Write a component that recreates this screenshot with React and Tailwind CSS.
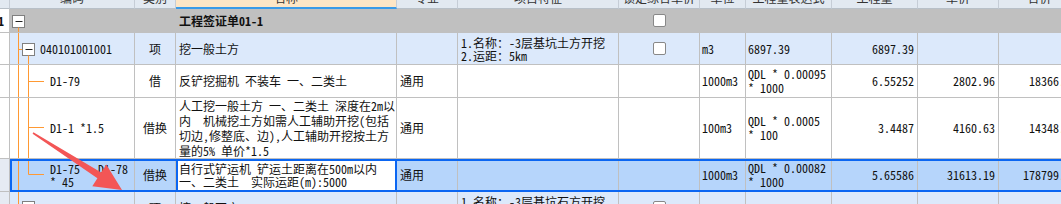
import React from 'react';

const W = [
  'w-[10px]', 'w-[125px]', 'w-[41px]', 'w-[221px]', 'w-[61px]', 'w-[161px]',
  'w-[81px]', 'w-[46px]', 'w-[86px]', 'w-[86px]', 'w-[81px]', 'w-[82px]',
];

const headers = ['', '编码', '类别', '名称', '专业', '项目特征', '锁定综合单价', '单位', '工程量表达式', '工程量', '单价', '合价'];

const ORANGE = '#ff9933';

function Cell({ i, className = '', children }) {
  return (
    <div className={`${W[i]} shrink-0 flex items-center overflow-hidden border-r border-b border-[#c0c0c0] ${className}`}>
      {children}
    </div>
  );
}

function Box({ x, y }) {
  return (
    <g>
      <rect x={x} y={y} width="12" height="12" fill="#fff" stroke="#808080" />
      <line x1={x + 3} y1={y + 6} x2={x + 10} y2={y + 6} stroke="#222" />
    </g>
  );
}

// tree connector lines drawn inside the code column
function Tree({ h, children }) {
  return (
    <svg className="absolute inset-0 pointer-events-none" width="125" height={h}>
      {children}
    </svg>
  );
}

function Check() {
  return <div className="w-[13px] h-[13px] bg-white border border-[#888] rounded-[2px]" />;
}

function Lines({ lines, className = '' }) {
  return (
    <div className={`whitespace-pre ${className}`}>
      {lines.map((l, k) => (
        <div key={k}>{l}</div>
      ))}
    </div>
  );
}

export default function App() {
  return (
    <div className="w-[1061px] h-[204px] overflow-hidden bg-white text-[12px] text-[#111] font-['Noto_Sans_Mono_CJK_SC','Noto_Sans_CJK_SC',monospace]">
      <div className="relative w-[1090px]">
        {/* header, only its lower edge is in view */}
        <div className="flex h-[9px]">
          {headers.map((t, i) => (
            <div
              key={i}
              className={`${W[i]} shrink-0 overflow-hidden border-r border-[#c6cdd6] ${
                i === 3 ? 'bg-[#fde6c6] border-b-2 border-b-[#3a9be8]' : 'bg-[#e2e9f1] border-b border-b-[#b8c0c8]'
              }`}
            >
              <div className="mt-[-8px] leading-[12px] text-center text-[#333] whitespace-nowrap">{t}</div>
            </div>
          ))}
        </div>

        {/* group row */}
        <div className="flex h-[24px] bg-[#c0c0c0]">
          <Cell i={0} className="bg-white font-bold">
            <span className="-ml-[2px]">1</span>
          </Cell>
          <Cell i={1} className="relative">
            <Tree h={24}>
              <Box x={2.5} y={6.5} />
              <line x1="8.5" y1="18.5" x2="8.5" y2="24" stroke={ORANGE} />
            </Tree>
          </Cell>
          <Cell i={2} />
          <Cell i={3} className="pl-[3px] font-bold">工程签证单01-1</Cell>
          <Cell i={4} />
          <Cell i={5} />
          <Cell i={6} className="justify-center">
            <Check />
          </Cell>
          <Cell i={7} />
          <Cell i={8} />
          <Cell i={9} />
          <Cell i={10} />
          <Cell i={11} />
        </div>

        {/* 清单 row */}
        <div className="flex h-[32px] bg-[#dce9fb]">
          <Cell i={0} className="bg-white" />
          <Cell i={1} className="relative pl-[30px]">
            <Tree h={32}>
              <line x1="8.5" y1="0" x2="8.5" y2="32" stroke={ORANGE} />
              <line x1="8.5" y1="16.5" x2="12.5" y2="16.5" stroke={ORANGE} />
              <Box x={12.5} y={10.5} />
              <line x1="18.5" y1="22.5" x2="18.5" y2="32" stroke={ORANGE} />
            </Tree>
            <span className="relative">040101001001</span>
          </Cell>
          <Cell i={2} className="justify-center">项</Cell>
          <Cell i={3} className="pl-[3px]">挖一般土方</Cell>
          <Cell i={4} />
          <Cell i={5} className="pl-[3px]">
            <Lines className="leading-[13px]" lines={['1.名称：-3层基坑土方开挖', '2.运距：5km']} />
          </Cell>
          <Cell i={6} className="justify-center">
            <Check />
          </Cell>
          <Cell i={7} className="pl-[2px]">m3</Cell>
          <Cell i={8} className="pl-[2px]">6897.39</Cell>
          <Cell i={9} className="justify-end pr-[3px]">6897.39</Cell>
          <Cell i={10} />
          <Cell i={11} />
        </div>

        {/* D1-79 */}
        <div className="flex h-[33px] bg-white">
          <Cell i={0} />
          <Cell i={1} className="relative pl-[40px]">
            <Tree h={33}>
              <line x1="8.5" y1="0" x2="8.5" y2="33" stroke={ORANGE} />
              <line x1="18.5" y1="0" x2="18.5" y2="33" stroke={ORANGE} />
              <line x1="18.5" y1="16.5" x2="34" y2="16.5" stroke={ORANGE} />
            </Tree>
            <span className="relative">D1-79</span>
          </Cell>
          <Cell i={2} className="justify-center">借</Cell>
          <Cell i={3} className="pl-[3px] whitespace-pre">反铲挖掘机 不装车 一、二类土</Cell>
          <Cell i={4} className="pl-[3px]">通用</Cell>
          <Cell i={5} />
          <Cell i={6} />
          <Cell i={7} className="pl-[2px]">1000m3</Cell>
          <Cell i={8} className="pl-[2px]">
            <Lines className="leading-[14px]" lines={['QDL * 0.00095', '* 1000']} />
          </Cell>
          <Cell i={9} className="justify-end pr-[3px]">6.55252</Cell>
          <Cell i={10} className="justify-end pr-[3px]">2802.96</Cell>
          <Cell i={11} className="justify-end pr-[3px]">18366.45</Cell>
        </div>

        {/* D1-1 *1.5 */}
        <div className="flex h-[61px] bg-white">
          <Cell i={0} />
          <Cell i={1} className="relative pl-[40px]">
            <Tree h={61}>
              <line x1="8.5" y1="0" x2="8.5" y2="61" stroke={ORANGE} />
              <line x1="18.5" y1="0" x2="18.5" y2="61" stroke={ORANGE} />
              <line x1="18.5" y1="29.5" x2="34" y2="29.5" stroke={ORANGE} />
            </Tree>
            <span className="relative whitespace-pre">D1-1 *1.5</span>
          </Cell>
          <Cell i={2} className="justify-center">借换</Cell>
          <Cell i={3} className="pl-[3px]">
            <Lines
              className="leading-[15px]"
              lines={[
                '人工挖一般土方 一、二类土 深度在2m以',
                '内  机械挖土方如需人工辅助开挖(包括',
                '切边,修整底、边),人工辅助开挖按土方',
                '量的5% 单价*1.5',
              ]}
            />
          </Cell>
          <Cell i={4} className="pl-[3px]">通用</Cell>
          <Cell i={5} />
          <Cell i={6} />
          <Cell i={7} className="pl-[2px]">100m3</Cell>
          <Cell i={8} className="pl-[2px]">
            <Lines className="leading-[14px]" lines={['QDL * 0.0005', '* 100']} />
          </Cell>
          <Cell i={9} className="justify-end pr-[3px]">3.4487</Cell>
          <Cell i={10} className="justify-end pr-[3px]">4160.63</Cell>
          <Cell i={11} className="justify-end pr-[3px]">14348.76</Cell>
        </div>

        {/* selected row D1-75 */}
        <div className="relative flex h-[33px] bg-[#b6d5fb]">
          <Cell i={0} className="bg-[#e6ebf3]" />
          <Cell i={1} className="relative pl-[40px]">
            <Tree h={33}>
              <line x1="8.5" y1="0" x2="8.5" y2="33" stroke={ORANGE} />
              <line x1="18.5" y1="0" x2="18.5" y2="15.5" stroke={ORANGE} />
              <line x1="18.5" y1="15.5" x2="34" y2="15.5" stroke={ORANGE} />
            </Tree>
            <Lines className="relative leading-[13px]" lines={['D1-75   D1-78', '* 45']} />
          </Cell>
          <Cell i={2} className="justify-center">借换</Cell>
          <Cell i={3} className="pl-[1px] bg-white border-l-2 border-l-[#0b66f2] border-r-2 border-r-[#0b66f2]">
            <Lines className="leading-[13px]" lines={['自行式铲运机 铲运土距离在500m以内', '一、二类土  实际运距(m):5000']} />
          </Cell>
          <Cell i={4} className="pl-[3px]">通用</Cell>
          <Cell i={5} />
          <Cell i={6} />
          <Cell i={7} className="pl-[2px]">1000m3</Cell>
          <Cell i={8} className="pl-[2px]">
            <Lines className="leading-[14px]" lines={['QDL * 0.00082', '* 1000']} />
          </Cell>
          <Cell i={9} className="justify-end pr-[3px]">5.65586</Cell>
          <Cell i={10} className="justify-end pr-[3px]">31613.19</Cell>
          <Cell i={11} className="justify-end pr-[3px]">178799.77</Cell>
          <div className="pointer-events-none absolute left-[10px] right-0 top-0 bottom-0 border-y-2 border-l-2 border-[#0b66f2]" />
        </div>

        {/* next 清单 row, cut by the window */}
        <div className="flex h-[32px] bg-[#dce9fb]">
          <Cell i={0} className="bg-[#e6ebf3]" />
          <Cell i={1} className="relative pl-[30px]">
            <Tree h={32}>
              <line x1="8.5" y1="0" x2="8.5" y2="32" stroke={ORANGE} />
              <line x1="8.5" y1="15.5" x2="12.5" y2="15.5" stroke={ORANGE} />
              <Box x={12.5} y={9.5} />
            </Tree>
            <span className="relative">040101002001</span>
          </Cell>
          <Cell i={2} className="justify-center">项</Cell>
          <Cell i={3} className="pl-[3px]">挖一般石方</Cell>
          <Cell i={4} />
          <Cell i={5} className="pl-[3px]">
            <Lines className="leading-[13px]" lines={['1.名称：-3层基坑石方开挖', '2.运距：5km']} />
          </Cell>
          <Cell i={6} className="justify-center">
            <Check />
          </Cell>
          <Cell i={7} className="pl-[2px]">m3</Cell>
          <Cell i={8} />
          <Cell i={9} />
          <Cell i={10} />
          <Cell i={11} />
        </div>

        {/* annotation arrow */}
        <svg className="pointer-events-none absolute left-0 top-0" width="200" height="204">
          <polygon
            points="32.6,133.7 97.4,178.3 92.3,186.3 122,190 106.3,164.5 101.2,172.5 33.4,132.3"
            fill="#f35656"
          />
        </svg>
      </div>
    </div>
  );
}
